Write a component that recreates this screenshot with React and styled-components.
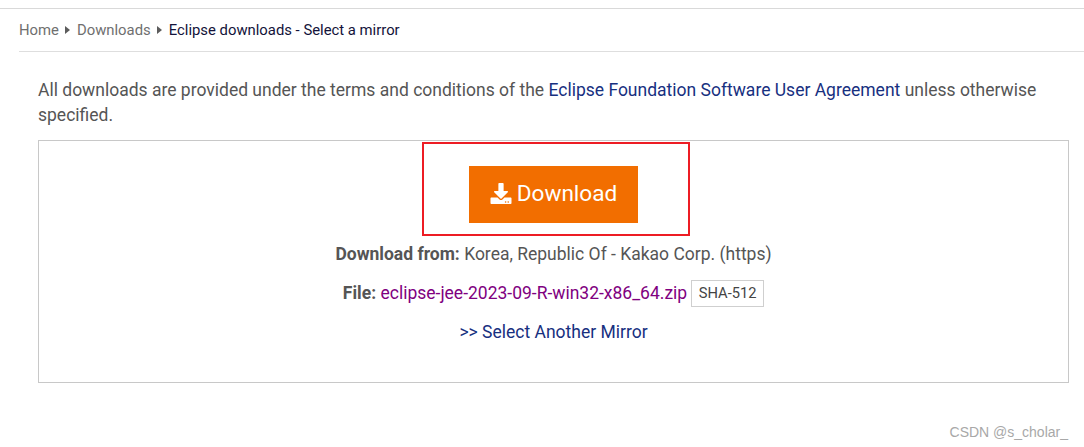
import React from 'react'
import styled, { createGlobalStyle } from 'styled-components'
import { FaDownload } from 'react-icons/fa'

const GlobalStyle = createGlobalStyle`
    html, body {
        margin: 0;
        padding: 0;
        background: #fff;
    }
    body {
        font-family: Roboto, "Liberation Sans", sans-serif;
        color: #4f4f4f;
    }
`

const App = () => {
    return (
        <Page>
            <GlobalStyle />
            <Breadcrumb>
                <Crumb>Home</Crumb>
                <Arrow />
                <Crumb>Downloads</Crumb>
                <Arrow />
                <Crumb $current>Eclipse downloads - Select a mirror</Crumb>
            </Breadcrumb>
            <Content>
                <Terms>
                    All downloads are provided under the terms and conditions of the{' '}
                    <TermsLink href="#">Eclipse Foundation Software User Agreement</TermsLink>{' '}
                    unless otherwise specified.
                </Terms>
                <DownloadBox>
                    <Highlight>
                        <DownloadButton href="#">
                            <FaDownload />
                            Download
                        </DownloadButton>
                    </Highlight>
                    <InfoLine $top={7}>
                        <strong>Download from:</strong> Korea, Republic Of - Kakao Corp. (https)
                    </InfoLine>
                    <InfoLine $top={15}>
                        <strong>File:</strong> <FileLink href="#">eclipse-jee-2023-09-R-win32-x86_64.zip</FileLink>
                        <HashButton>SHA-512</HashButton>
                    </InfoLine>
                    <InfoLine $top={14}>
                        <MirrorLink href="#">&gt;&gt; Select Another Mirror</MirrorLink>
                    </InfoLine>
                </DownloadBox>
            </Content>
            <Watermark>CSDN @s_cholar_</Watermark>
        </Page>
    )
}

const Page = styled.div`
    position: relative;
    width: 1084px;
    height: 447px;
    overflow: hidden;
    padding-top: 8px;
    box-sizing: border-box;
    &::before {
        content: '';
        display: block;
        height: 1px;
        background: #d9d9d9;
    }
`

const Breadcrumb = styled.div`
    display: flex;
    align-items: center;
    height: 43px;
    margin-left: 19px;
    border-bottom: 1px solid #dedede;
    font-size: 14.85px;
    box-sizing: border-box;
`

const Crumb = styled.span`
    color: ${props => props.$current ? '#13133a' : '#6f6f6f'};
`

const Arrow = styled.span`
    width: 0;
    height: 0;
    margin: 0 7px 0 6px;
    border-left: 5px solid #5c5c5c;
    border-top: 4px solid transparent;
    border-bottom: 4px solid transparent;
`

const Content = styled.div`
    padding: 26px 15px 0 38px;
`

const Terms = styled.p`
    margin: 0 0 12px;
    font-size: 17.5px;
    line-height: 25px;
    color: #555;
`

const TermsLink = styled.a`
    color: #17307f;
    text-decoration: none;
`

const DownloadBox = styled.div`
    display: flex;
    flex-direction: column;
    align-items: center;
    height: 243px;
    box-sizing: border-box;
    border: 1px solid #c8c8c8;
`

const Highlight = styled.div`
    display: flex;
    align-items: center;
    justify-content: center;
    width: 268px;
    height: 94px;
    margin: 1px 0 0 4px;
    padding: 11px 4px 0 0;
    box-sizing: border-box;
    border: 2px solid #ed1c24;
`

const DownloadButton = styled.a`
    display: flex;
    align-items: center;
    justify-content: center;
    gap: 5px;
    width: 169px;
    height: 57px;
    padding-bottom: 3px;
    box-sizing: border-box;
    background: #f26e00;
    color: #fff;
    font-size: 22.6px;
    text-decoration: none;
    svg {
        width: 22px;
        height: 21px;
    }
`

const InfoLine = styled.div`
    margin-top: ${props => props.$top}px;
    min-height: 22px;
    font-size: 17.5px;
    line-height: 22px;
    color: #555;
    text-align: center;
    strong {
        font-weight: 700;
    }
`

const FileLink = styled.a`
    color: #800080;
    text-decoration: none;
`

const HashButton = styled.span`
    display: inline-block;
    width: 73px;
    height: 27px;
    margin-left: 4px;
    box-sizing: border-box;
    border: 1px solid #cfcfcf;
    font-size: 14.7px;
    line-height: 25px;
    text-align: center;
    vertical-align: 1px;
    color: #444;
`

const MirrorLink = styled.a`
    color: #17307f;
    text-decoration: none;
`

const Watermark = styled.div`
    position: absolute;
    right: 16px;
    bottom: 7px;
    font-family: "Liberation Sans", sans-serif;
    font-size: 14px;
    color: #a8a8a8;
`

export default App
